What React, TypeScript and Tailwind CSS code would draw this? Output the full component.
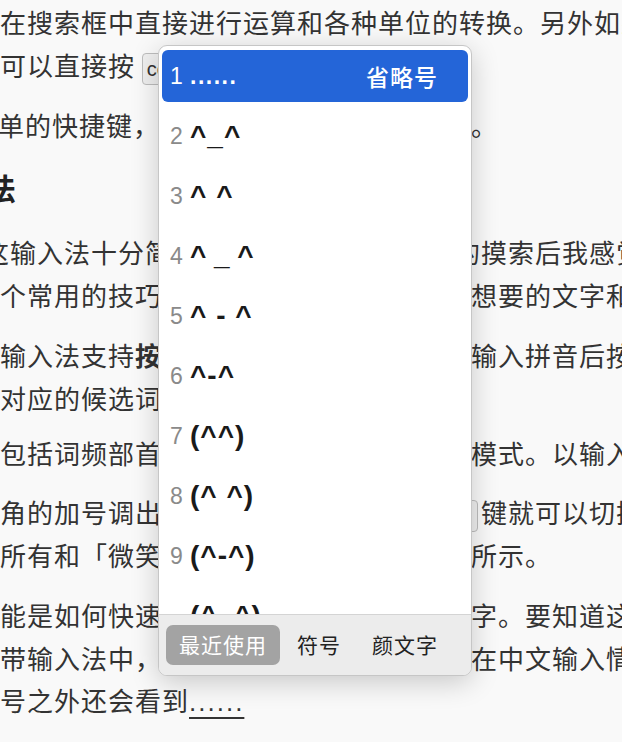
import type { ReactNode } from "react";
import clsx from "clsx";

function Key({ children, className }: { children: ReactNode; className?: string }) {
  return (
    <span
      className={clsx(
        "inline-flex h-[32px] items-center rounded-[4px] border border-[#bdbdbd] bg-[#efefef] px-[4px] align-middle font-['Liberation_Sans',sans-serif] text-[20px] leading-none tracking-normal text-[#333]",
        className
      )}
    >
      {children}
    </span>
  );
}

function Line({
  className,
  children,
  right,
  rightClass,
}: {
  className?: string;
  children: ReactNode;
  right?: ReactNode;
  rightClass?: string;
}) {
  return (
    <div className={clsx("flex h-[43px] items-center whitespace-nowrap leading-[43px]", className)}>
      <div className="w-[471px] shrink-0 overflow-hidden">{children}</div>
      {right && <div className={clsx("shrink-0", rightClass)}>{right}</div>}
    </div>
  );
}

const candidates = ["......", "^_^", "^ ^", "^\u2009_\u2009^", "^ - ^", "^-^", "(^^)", "(^ ^)", "(^-^)", "(^_^)"];

function Popup() {
  return (
    <div className="absolute left-[158px] top-[45px] flex h-[631px] w-[314px] flex-col overflow-hidden rounded-[9px] border border-[#c6c6c6] bg-white font-['Liberation_Sans','Noto_Sans_CJK_SC',sans-serif] shadow-[0_6px_28px_rgba(0,0,0,0.2)]">
      <div className="flex-1 overflow-hidden px-[3px]">
        {candidates.map((c, i) => (
          <div key={i} className="h-[60px] py-[4px]">
            {i === 0 ? (
              <div className="flex h-full items-center rounded-[6px] bg-[#2465d8] pl-[8px] pr-[30px] text-white">
                <span className="w-[20px] text-[23px]">1</span>
                <span className="text-[23px] font-bold tracking-[1.5px]">{c}</span>
                <span className="ml-auto font-['Noto_Sans_CJK_SC',sans-serif] text-[23px] font-medium">省略号</span>
              </div>
            ) : (
              <div className="flex h-full items-center pl-[8px]">
                <span className="w-[20px] text-[23px] text-[#8a8a8a]">{i < 9 ? i + 1 : ""}</span>
                <span className="whitespace-pre text-[28px] font-semibold text-[#1a1a1a]">{c}</span>
              </div>
            )}
          </div>
        ))}
      </div>
      <div className="flex h-[61px] shrink-0 items-center gap-[2px] border-t border-[#d4d4d4] bg-[#ececec] pl-[7px] font-['Noto_Sans_CJK_SC',sans-serif] text-[21px]">
        <span className="flex h-[40px] items-center rounded-[7px] bg-[#a3a3a3] px-[13px] text-white">最近使用</span>
        <span className="flex h-[40px] items-center px-[15px] text-[#222]">符号</span>
        <span className="flex h-[40px] items-center px-[14px] text-[#222]">颜文字</span>
      </div>
    </div>
  );
}

export default function App() {
  return (
    <div className="relative h-[742px] w-full overflow-hidden bg-[#f9f9f9] font-['Noto_Sans_CJK_SC',sans-serif] text-[26px] tracking-[1px] text-[#333]">
      <div>
        <div className="h-[43px] whitespace-nowrap leading-[43px]">在搜索框中直接进行运算和各种单位的转换。另外如果</div>
        <Line>
          可以直接按 <Key>command + 空格</Key> 调出
        </Line>
        <Line className="mt-[17px]" right="。">
          <span className="-ml-[2px] inline-block">单的快捷键，也可以在设置中自定义快捷键</span>
        </Line>
        <div className="mt-[20px] h-[43px] overflow-hidden whitespace-nowrap text-[30px] font-bold leading-[43px] tracking-normal text-[#222]">
          <span className="-ml-[74px] inline-block">输入法</span>
        </div>
        <Line className="mt-[21px]" right="的摸索后我感觉" rightClass="-ml-[17px]">
          <span className="-ml-[17px] inline-block">这输入法十分简单，不过经过一段时间</span>
        </Line>
        <Line right="想要的文字和符号">个常用的技巧，可以帮助你更快地输入</Line>
        <Line className="mt-[17px]" right="输入拼音后按">
          输入法支持<b className="font-bold">按</b>数字键选择候选词，在
        </Line>
        <Line>对应的候选词</Line>
        <Line className="mt-[12px]" right="模式。以输入">包括词频部首等多种不同的排序</Line>
        <Line
          className="mt-[16px]"
          right={
            <>
              <Key className="-ml-[24px] w-[31px]">⇧</Key>
              <span className="ml-[3px]">键就可以切换</span>
            </>
          }
        >
          角的加号调出符号面板，按下
        </Line>
        <Line right="所示。">所有和「微笑」相关的颜文字，如下图</Line>
        <Line className="mt-[17px]" right="字。要知道这">能是如何快速输入各种特殊的符号和文</Line>
        <Line right="在中文输入情况下">带输入法中，省略号的输入并不直观，</Line>
        <Line>
          号之外还会看到<span className="underline decoration-[2px] underline-offset-[6px] font-['Liberation_Sans',sans-serif] tracking-[2px]">......</span>
        </Line>
      </div>
      <Popup />
    </div>
  );
}
